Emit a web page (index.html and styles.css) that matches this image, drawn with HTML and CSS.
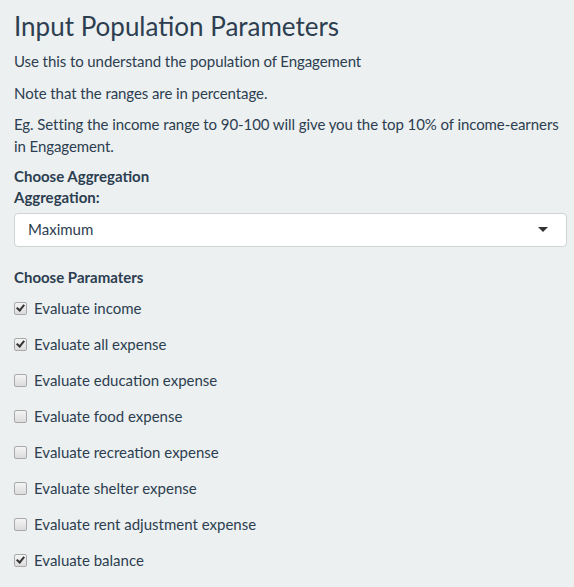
FILE: index.html
```html
<!DOCTYPE html>
<html>
<head>
<meta charset="utf-8">
<link rel="stylesheet" href="styles.css">
</head>
<body>
<div class="panel">
  <h3 class="title">Input Population Parameters</h3>
  <p>Use this to understand the population of Engagement</p>
  <p>Note that the ranges are in percentage.</p>
  <p class="last">Eg. Setting the income range to 90-100 will give you the top 10% of income-earners in Engagement.</p>
  <div class="section-label">Choose Aggregation</div>
  <div class="field">
    <label class="field-label">Aggregation:</label>
    <div class="select">
      <span>Maximum</span>
      <span class="caret"></span>
    </div>
  </div>
  <div class="section-label params">Choose Paramaters</div>
  <div class="checks">
    <label class="check"><span class="box checked"></span>Evaluate income</label>
    <label class="check"><span class="box checked"></span>Evaluate all expense</label>
    <label class="check"><span class="box"></span>Evaluate education expense</label>
    <label class="check"><span class="box"></span>Evaluate food expense</label>
    <label class="check"><span class="box"></span>Evaluate recreation expense</label>
    <label class="check"><span class="box"></span>Evaluate shelter expense</label>
    <label class="check"><span class="box"></span>Evaluate rent adjustment expense</label>
    <label class="check"><span class="box checked"></span>Evaluate balance</label>
  </div>
</div>
</body>
</html>
```
FILE: styles.css
```css
html, body {
  margin: 0;
  padding: 0;
  background: #ecf0f1;
}
body {
  font-family: Lato, "Open Sans", sans-serif;
  font-size: 15px;
  line-height: 1.42857;
  color: #2c3e50;
}
.panel {
  padding: 12px 7px 0 14px;
}
.title {
  font-size: 26px;
  font-weight: 400;
  line-height: 1.1;
  margin: 0 0 10px 0;
}
p {
  margin: 0 0 10.5px 0;
  letter-spacing: -0.08px;
}
p.last {
  margin-bottom: 8.5px;
}
.section-label {
  font-weight: 700;
}
.field {
  margin-bottom: 20px;
}
.field-label {
  display: block;
  font-weight: 700;
  margin-bottom: 4px;
}
.select {
  height: 34px;
  box-sizing: border-box;
  background: #fff;
  border: 1px solid #cfd4d6;
  border-radius: 4px;
  display: flex;
  align-items: center;
  justify-content: space-between;
  padding: 0 18px 0 13px;
}
.caret {
  width: 0;
  height: 0;
  border-left: 5px solid transparent;
  border-right: 5px solid transparent;
  border-top: 5px solid #333;
}
.params {
  margin-bottom: 10px;
}
.checks {
  display: flex;
  flex-direction: column;
  gap: 14.5px;
}
.check {
  display: flex;
  align-items: center;
  height: 21.5px;
}
.box {
  width: 11px;
  height: 11px;
  border: 1px solid #a9a9a9;
  border-radius: 2px;
  background: linear-gradient(#f4f4f4, #dcdcdc);
  margin-right: 7px;
  position: relative;
  flex: none;
}
.box.checked::after {
  content: "";
  position: absolute;
  left: 3px;
  top: 0px;
  width: 3px;
  height: 6px;
  border-right: 2px solid #333;
  border-bottom: 2px solid #333;
  transform: rotate(40deg);
}
```
